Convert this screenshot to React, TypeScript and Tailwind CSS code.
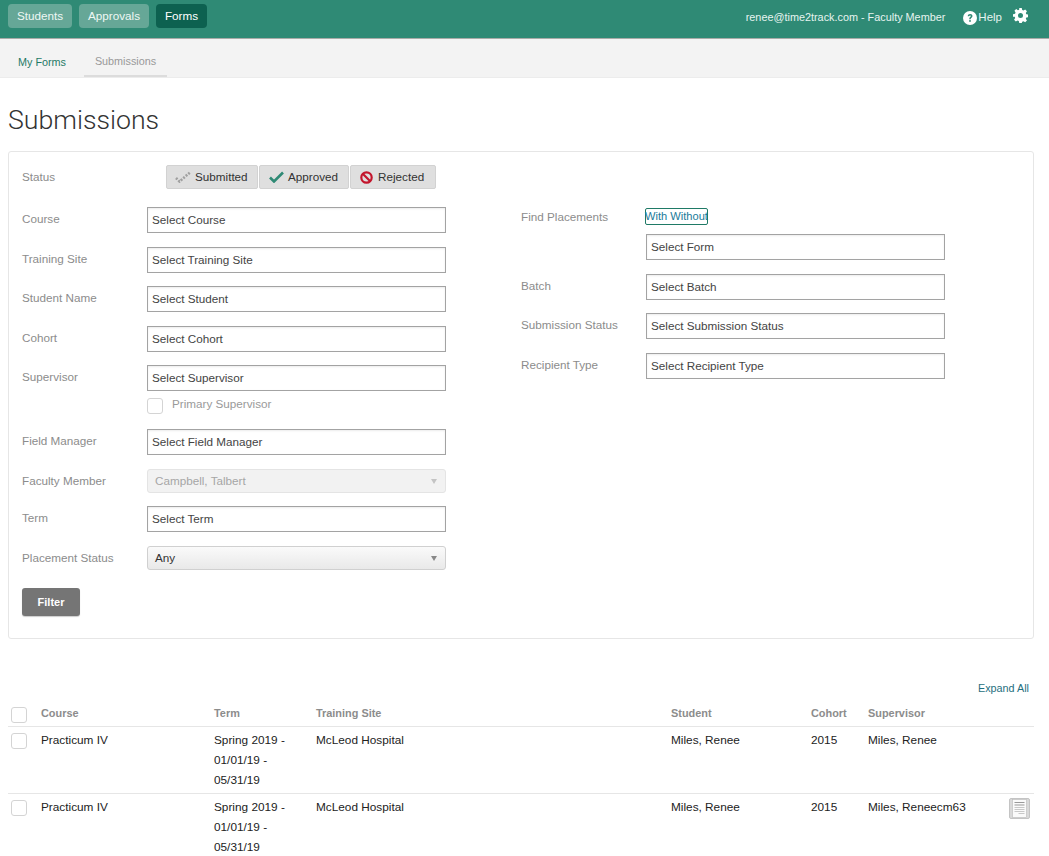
const Label = ({ children, className = "" }: { children?: React.ReactNode; className?: string }) => (
  <div className={`w-[125px] shrink-0 text-[11.700px] leading-[16px] text-[#8c8c8c] ${className}`}>{children}</div>
);

const SelectBox = ({ text }: { text: string }) => (
  <div className="flex h-[26px] w-[299px] items-center border border-[#a3a3a3] bg-white pl-1 text-[11.700px] text-[#444] shadow-[inset_0_1px_2px_rgba(0,0,0,0.08)]">
    {text}
  </div>
);

const Row = ({ label, text, className = "" }: { label: string; text: string; className?: string }) => (
  <div className={`flex ${className}`}>
    <Label className="mt-[4px]">{label}</Label>
    <SelectBox text={text} />
  </div>
);

const Dropdown = ({ text, disabled }: { text: string; disabled?: boolean }) => (
  <div
    className={
      disabled
        ? "flex h-[24px] w-[299px] items-center justify-between rounded-[3px] border border-[#e4e4e4] bg-[#f2f2f2] pl-[7px] pr-[8px] text-[11.700px] text-[#a6a6a6]"
        : "flex h-[24px] w-[299px] items-center justify-between rounded-[3px] border border-[#d0d0d0] bg-gradient-to-b from-[#fafafa] to-[#e9e9e9] pl-[7px] pr-[8px] text-[11.700px] text-[#333]"
    }
  >
    <span>{text}</span>
    <span className={`h-0 w-0 border-x-[3px] border-t-[5px] border-x-transparent ${disabled ? "border-t-[#c4c4c4]" : "border-t-[#888]"}`} />
  </div>
);

const CheckBox = ({ className = "" }: { className?: string }) => (
  <div className={`h-[16px] w-[16px] rounded-[3px] border border-[#d4d4d4] bg-white ${className}`} />
);

const StatusButton = ({ children, className = "" }: { children: React.ReactNode; className?: string }) => (
  <div className={`flex h-[24px] items-center rounded-[2px] border border-[#d2d2d2] bg-[#dfdfdf] text-[11.700px] text-[#333] ${className}`}>
    {children}
  </div>
);

const DottedCheck = () => (
  <svg width="17" height="12" viewBox="0 0 17 12" fill="none" stroke="#a0a0a0" strokeWidth="2.600" strokeDasharray="2 1.300">
    <path d="M1 7l3.500 3.500L15.500 1" />
  </svg>
);

const CheckMark = () => (
  <svg width="15" height="12" viewBox="0 0 15 12" fill="none" stroke="#2f8a75" strokeWidth="2.600">
    <path d="M1 6.500l4 4L14 1.500" />
  </svg>
);

const BanMark = () => (
  <svg width="13" height="13" viewBox="0 0 13 13" fill="none" stroke="#c3152c" strokeWidth="2.200">
    <circle cx="6.500" cy="6.500" r="5.200" />
    <path d="M3 3l7 7" />
  </svg>
);

const HelpMark = () => (
  <svg width="14" height="14" viewBox="0 0 14 14">
    <circle cx="7" cy="7" r="7" fill="#fff" />
    <path d="M4.700 5.300C4.800 3.900 5.800 3.100 7.100 3.100c1.400 0 2.400.9 2.400 2 0 1.700-1.800 1.600-1.800 3.100H6.200c0-2.200 1.700-2.200 1.700-3.100 0-.4-.3-.7-.8-.7-.6 0-.9.3-1 .9z" fill="#2f8a75" />
    <rect x="6.200" y="9.100" width="1.600" height="1.700" fill="#2f8a75" />
  </svg>
);

const GearMark = () => (
  <svg width="15" height="15" viewBox="0 0 24 24">
    <path
      fillRule="evenodd"
      fill="#fff"
      d="M10 0h4l.7 3.300 2 .8L19.500 2.300l2.800 2.800-1.800 2.800.8 2 3.300.7v4l-3.300.7-.8 2 1.800 2.800-2.800 2.800-2.800-1.800-2 .8L14 24h-4l-.7-3.300-2-.8-2.800 1.800-2.800-2.800 1.800-2.800-.8-2L0 14v-4l3.300-.7.8-2-1.800-2.800 2.800-2.800 2.800 1.800 2-.8zM12 8a4 4 0 1 0 0 8 4 4 0 0 0 0-8z"
    />
  </svg>
);

const DocIcon = () => (
  <svg width="21" height="21" viewBox="0 0 21 21" fill="none">
    <rect x="0.500" y="0.500" width="20" height="20" rx="1.500" fill="#d9d9d9" stroke="#c4c4c4" />
    <rect x="3.500" y="1.500" width="14" height="18" fill="#fafafa" stroke="#bbb" strokeWidth="0.600" />
    <path d="M5.500 4.500h10M5.500 7h10" stroke="#999" strokeWidth="1" />
    <path d="M5.500 9.500h10M5.500 11.500h10M5.500 13.500h10M9.500 15.500h6" stroke="#bbb" strokeWidth="0.800" />
  </svg>
);

const TableRow = ({ supervisor, doc }: { supervisor: string; doc?: boolean }) => (
  <div className="grid grid-cols-[33px_173px_102px_355px_140px_57px_1fr] border-b border-[#e6e6e6] pb-[3px] pt-[3px] text-[11.800px] leading-[20px] text-[#222]">
    <div className="pl-[3px] pt-[3px]">
      <CheckBox />
    </div>
    <div>Practicum IV</div>
    <div>Spring 2019 - 01/01/19 - 05/31/19</div>
    <div>McLeod Hospital</div>
    <div>Miles, Renee</div>
    <div>2015</div>
    <div className="flex justify-between pr-[4px]">
      <span>{supervisor}</span>
      {doc && (
        <span className="mt-[1px]">
          <DocIcon />
        </span>
      )}
    </div>
  </div>
);

export default function App() {
  return (
    <div className="h-[856px] overflow-hidden bg-white font-['Liberation_Sans',Arial,sans-serif]">
      <header className="flex h-[39px] items-start justify-between border-b border-[#a9aba8] bg-[#2f8a75] pl-[8px] pr-[21px] pt-[4px]">
        <nav className="flex gap-[7px] text-[11.700px] text-[#eef7f4]">
          <div className="flex h-[24px] w-[64px] items-center justify-center rounded-[4px] bg-[#66a797]">Students</div>
          <div className="flex h-[24px] w-[70px] items-center justify-center rounded-[4px] bg-[#66a797]">Approvals</div>
          <div className="flex h-[24px] w-[51px] items-center justify-center rounded-[4px] bg-[#0d6150] text-white">Forms</div>
        </nav>
        <div className="flex items-center pt-[4px] text-[#e6f4f0]">
          <span className="text-[10.850px]">renee@time2track.com - Faculty Member</span>
          <span className="ml-[18px]">
            <HelpMark />
          </span>
          <span className="ml-[1px] text-[11.500px]">Help</span>
          <span className="mb-[4px] ml-[11px]">
            <GearMark />
          </span>
        </div>
      </header>

      <div className="flex h-[39px] items-end border-b border-[#ececec] bg-[#f3f3f3] pl-[8px] text-[10.800px]">
        <div className="flex h-[39px] w-[68px] items-center justify-center pt-[10px] text-[#1f7a66]">My Forms</div>
        <div className="ml-[8px] flex h-[39px] w-[83px] items-center justify-center border-b-2 border-[#dcdcdc] pt-[10px] text-[#999]">Submissions</div>
      </div>

      <main className="px-[8px]">
        <h1 className="mt-[24px] font-['Roboto',sans-serif] text-[26.700px] font-light leading-[36px] text-[#333]">Submissions</h1>

        <section className="mt-[13px] flex h-[488px] w-[1026px] rounded-[3px] border border-[#e6e6e6] pl-[13px] pt-[13px]">
          <div className="w-[499px]">
            <div className="flex">
              <Label className="mt-[4px] w-[144px]">Status</Label>
              <div className="flex gap-px">
                <StatusButton className="w-[92px] pl-[8px]">
                  <DottedCheck />
                  <span className="ml-[3px]">Submitted</span>
                </StatusButton>
                <StatusButton className="w-[90px] pl-[9px]">
                  <CheckMark />
                  <span className="ml-[4px]">Approved</span>
                </StatusButton>
                <StatusButton className="w-[86px] pl-[9px]">
                  <BanMark />
                  <span className="ml-[5px]">Rejected</span>
                </StatusButton>
              </div>
            </div>

            <Row label="Course" text="Select Course" className="mt-[18px]" />
            <Row label="Training Site" text="Select Training Site" className="mt-[14px]" />
            <Row label="Student Name" text="Select Student" className="mt-[13px]" />
            <Row label="Cohort" text="Select Cohort" className="mt-[14px]" />
            <Row label="Supervisor" text="Select Supervisor" className="mt-[13px]" />

            <div className="mt-[6px] flex pl-[125px]">
              <CheckBox className="mt-[1px]" />
              <span className="ml-[9px] text-[11.700px] leading-[14px] text-[#9a9a9a]">Primary Supervisor</span>
            </div>

            <Row label="Field Manager" text="Select Field Manager" className="mt-[15px]" />

            <div className="mt-[14px] flex">
              <Label className="mt-[4px]">Faculty Member</Label>
              <Dropdown text="Campbell, Talbert" disabled />
            </div>

            <Row label="Term" text="Select Term" className="mt-[13px]" />

            <div className="mt-[14px] flex">
              <Label className="mt-[4px]">Placement Status</Label>
              <Dropdown text="Any" />
            </div>

            <button className="mt-[18px] flex h-[28px] w-[58px] items-center justify-center rounded-[3px] bg-[#757575] text-[11px] font-bold text-white shadow-[0_1px_1px_rgba(0,0,0,0.2)]">
              Filter
            </button>
          </div>

          <div className="pt-[43px]">
            <div className="flex">
              <Label className="mt-[1px]">Find Placements</Label>
              <div className="-ml-px flex h-[17px] w-[63px] items-center justify-center rounded-[2px] border border-[#1f7a66] text-[11.100px] whitespace-nowrap text-[#1a7a9a]">
                With Without
              </div>
            </div>
            <div className="mt-[9px] pl-[125px]">
              <SelectBox text="Select Form" />
            </div>
            <Row label="Batch" text="Select Batch" className="mt-[14px]" />
            <Row label="Submission Status" text="Select Submission Status" className="mt-[13px]" />
            <Row label="Recipient Type" text="Select Recipient Type" className="mt-[14px]" />
          </div>
        </section>

        <div className="mt-[42px] w-[1026px]">
          <div className="pr-[5px] text-right text-[10.800px] leading-[14px] text-[#1f6f80]">Expand All</div>
          <div className="mt-[8px] grid h-[24px] grid-cols-[33px_173px_102px_355px_140px_57px_1fr] items-center border-b border-[#e6e6e6] pb-[2px] text-[10.900px] font-bold text-[#8c8c8c]">
            <div className="pl-[3px] pt-[3px]">
              <CheckBox />
            </div>
            <div>Course</div>
            <div>Term</div>
            <div>Training Site</div>
            <div>Student</div>
            <div>Cohort</div>
            <div>Supervisor</div>
          </div>
          <TableRow supervisor="Miles, Renee" />
          <TableRow supervisor="Miles, Reneecm63" doc />
        </div>
      </main>
    </div>
  );
}
